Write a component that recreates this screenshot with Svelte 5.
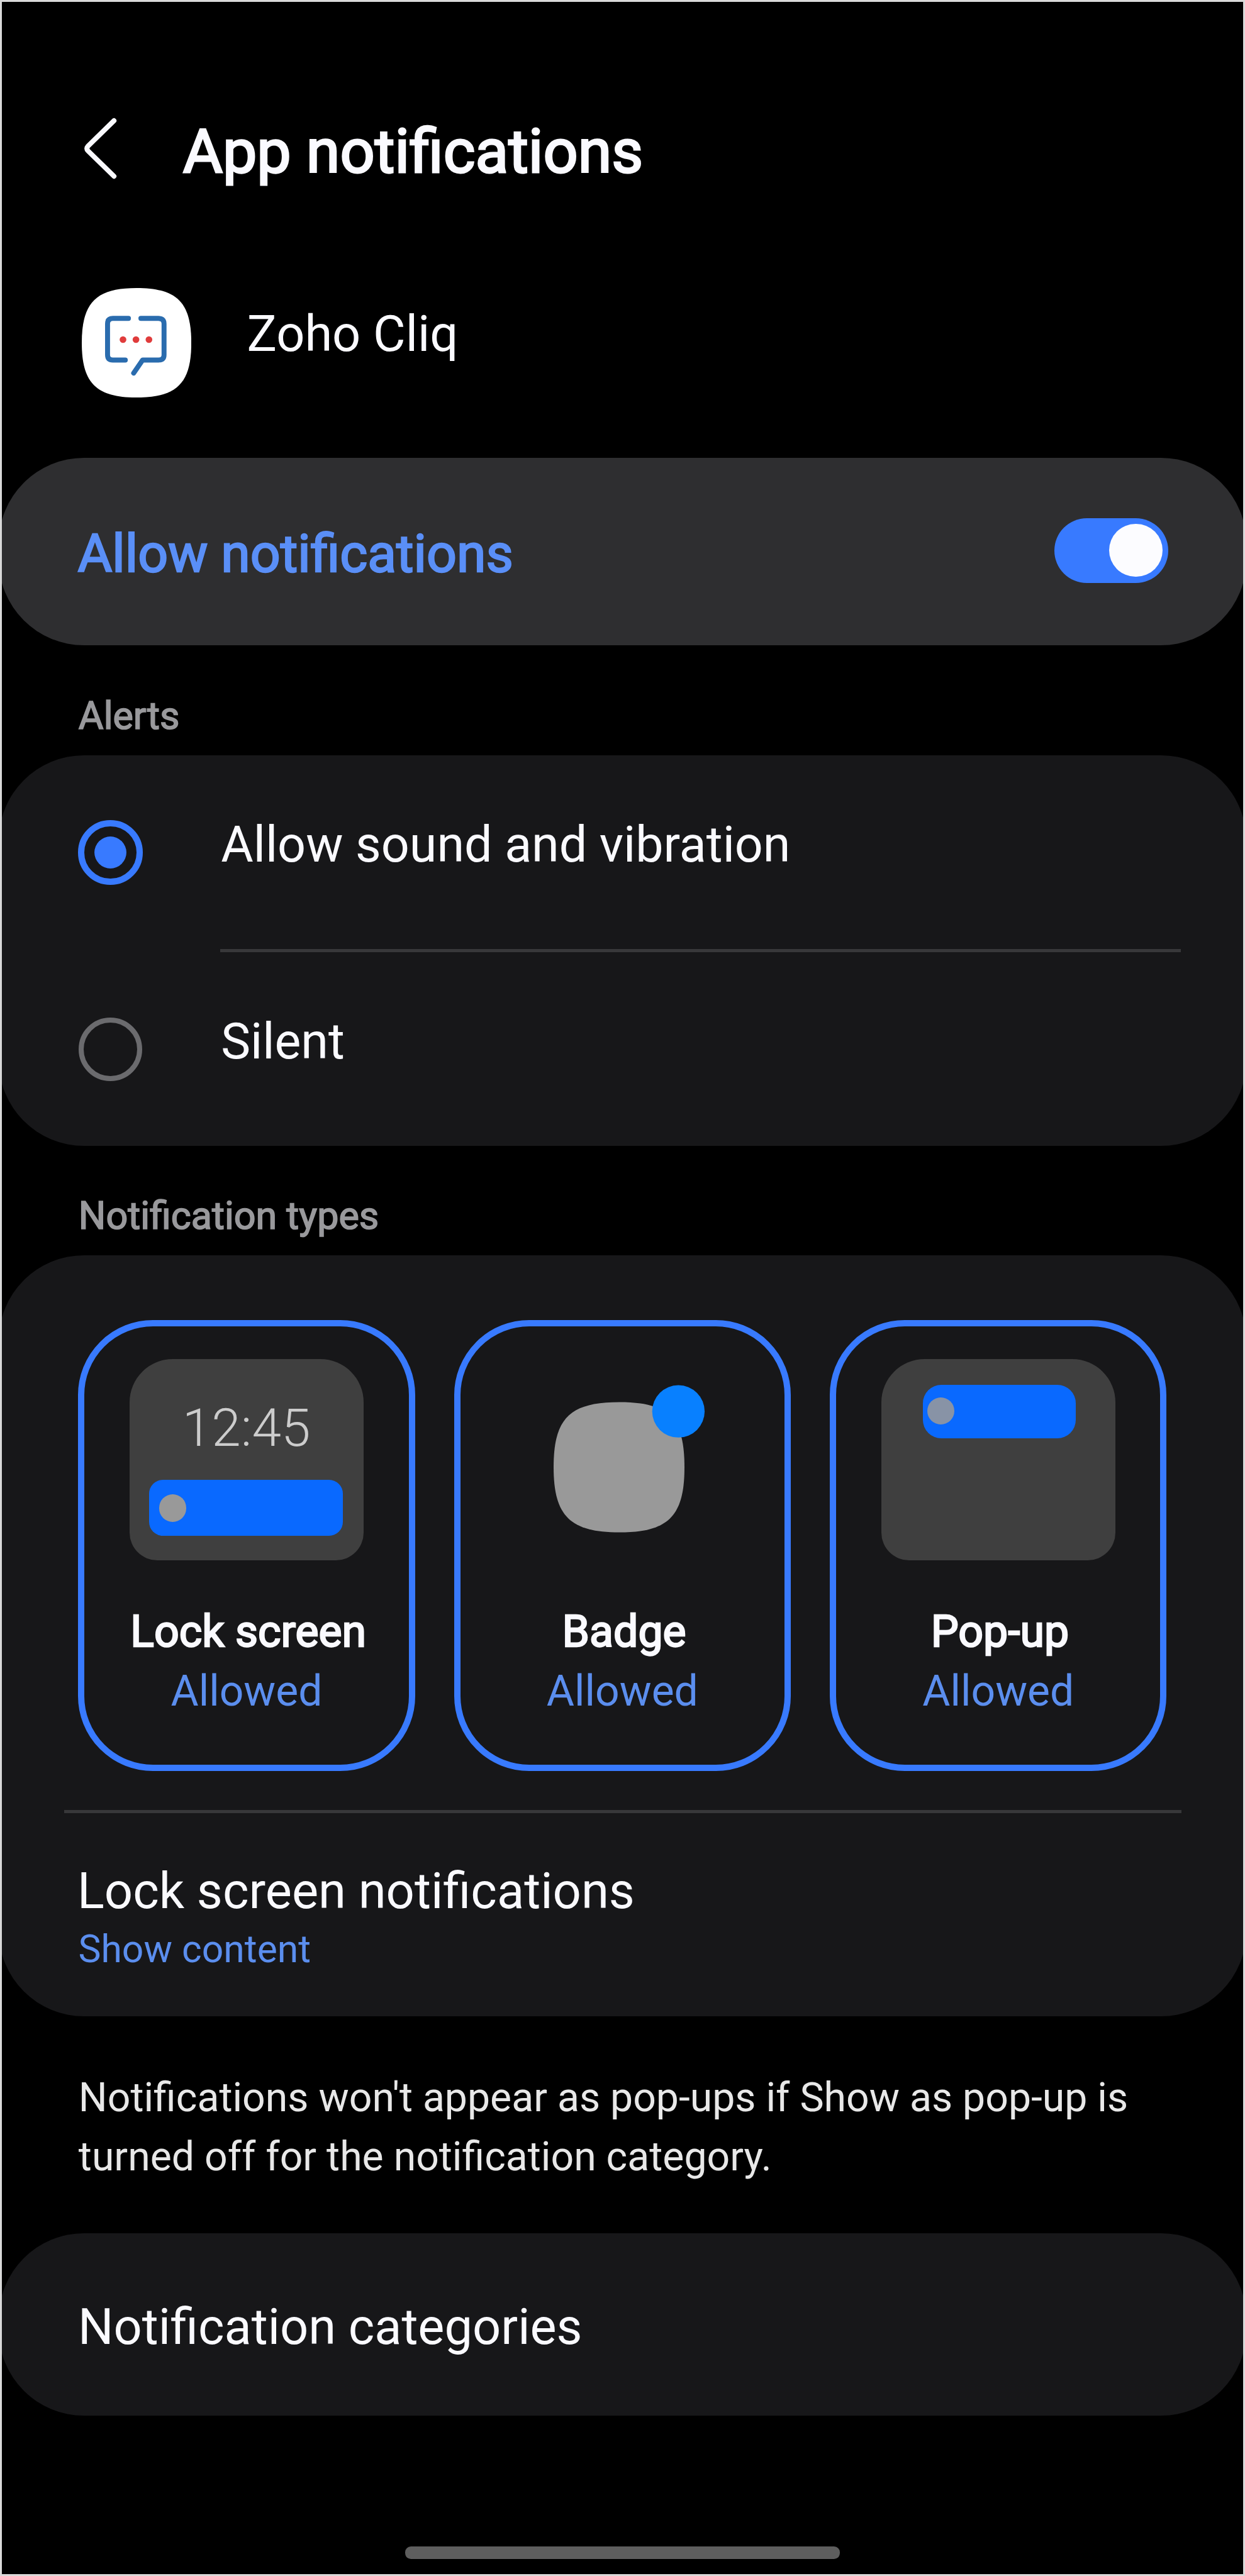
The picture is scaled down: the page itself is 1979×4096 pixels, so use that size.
<script>
	let allowed = true;
	let alert_mode = "sound";

	const alert_modes = [
		{id: "sound", label: "Allow sound and vibration"},
		{id: "silent", label: "Silent"},
	];

	let types = [
		{id: "lock", label: "Lock screen", on: true},
		{id: "badge", label: "Badge", on: true},
		{id: "popup", label: "Pop-up", on: true},
	];

	const toggle_allowed = () => allowed = !allowed;
	const set_mode = (id) => alert_mode = id;
	function toggle_type(type) {
		type.on = !type.on;
		types = types;
	}
</script>

<div class="screen">
	<header>
		<svg class="back" viewBox="0 0 64 112">
			<path d="M57 7.500 L12 51.500 Q8 56 12 60 L57 104" />
		</svg>
		<h1>App notifications</h1>
	</header>

	<div class="app_row">
		<svg class="app_icon" viewBox="0 0 190 190">
			<path class="plate" d="M0 95 C0 25 25 0 95 0 S190 25 190 95 S165 190 95 190 S0 165 0 95 Z" />
			<path class="bubble" d="M81 52.7 H54 Q44.700 52.700 44.700 62 V116 Q44.700 125 54 125 H75.500 M102.500 52.700 H133 Q142.700 52.700 142.700 62 V116 Q142.700 125 133 125 H105.500 L90 147.500" />
			<circle cx="71.500" cy="89.500" r="5.800" />
			<circle cx="94" cy="89.500" r="5.800" />
			<circle cx="116.500" cy="89.500" r="5.800" />
		</svg>
		<span>Zoho Cliq</span>
	</div>

	<section class="card main_switch">
		<span>Allow notifications</span>
		<button class="switch" class:on={allowed} on:click={toggle_allowed} aria-label="Allow notifications">
			<i></i>
		</button>
	</section>

	<h2>Alerts</h2>
	<section class="card alerts">
		{#each alert_modes as mode}
			<button class="mode" on:click={() => set_mode(mode.id)}>
				<span class="radio" class:selected={alert_mode == mode.id}></span>
				<span class="mode_label">{mode.label}</span>
			</button>
		{/each}
	</section>

	<h2>Notification types</h2>
	<section class="card types">
		<div class="tiles">
			{#each types as type}
				<button class="tile" class:on={type.on} on:click={() => toggle_type(type)}>
					<span class="preview {type.id}">
						{#if type.id == "lock"}
							<span class="clock">12:45</span>
							<span class="bar"><i></i></span>
						{:else if type.id == "badge"}
							<svg viewBox="0 0 264 256">
								<path d="M0 143 C0 58 28 30 114 30 S227 58 227 143 S199 256 114 256 S0 228 0 143 Z" />
								<circle cx="216.500" cy="46" r="45.500" />
							</svg>
						{:else}
							<span class="bar"><i></i></span>
						{/if}
					</span>
					<span class="name">{type.label}</span>
					<span class="state">{type.on ? "Allowed" : "Not allowed"}</span>
				</button>
			{/each}
		</div>
		<div class="lock_setting">
			<span class="title">Lock screen notifications</span>
			<span class="value">Show content</span>
		</div>
	</section>

	<p>Notifications won't appear as pop-ups if Show as pop-up is turned off for the notification category.</p>

	<section class="card categories">Notification categories</section>

	<div class="home_bar"></div>
</div>

<style>
	:global(html) { font-size: 9.163px; }
	:global(body) {
		margin: 0;
		background: #000;
	}

	.screen {
		display: flex;
		flex-direction: column;
		box-sizing: border-box;
		width: 100vw;
		height: 100vh;
		border: 0.4rem solid #d9d9d9;
		overflow: hidden;
		background: #000;
		color: #fafaff;
		font: 8.66rem/10rem Roboto, sans-serif;
	}
	.screen > * { flex-shrink: 0; }

	button {
		padding: 0;
		border: none;
		background: none;
		color: inherit;
		font: inherit;
		text-align: left;
	}
	i { display: block; border-radius: 50%; }

	/*
	 * HEADER
	 * */
	header {
		display: flex;
		align-items: flex-start;
		padding: 19.9rem 0 0 13.8rem;
		height: 29.8rem;
	}
	.back {
		width: 6.4rem;
		height: 11.2rem;
		margin-right: 11.2rem;
		fill: none;
		stroke: #fafaff;
		stroke-width: 8.5;
		stroke-linecap: round;
	}
	h1 {
		margin: 0;
		font-size: 10.58rem;
		line-height: 12.4rem;
		font-weight: 400;
		-webkit-text-stroke: 0.32rem #fafaff;
	}

	.app_row {
		display: flex;
		height: 29.4rem;
		padding-left: 13.9rem;
	}
	.app_icon {
		width: 19rem;
		height: 19rem;
		margin-right: 9.6rem;
	}
	.app_row span { margin-top: 2.95rem; }
	.plate { fill: #fff; }
	.bubble {
		fill: none;
		stroke: #2a6cae;
		stroke-width: 8.6;
		stroke-linecap: round;
		stroke-linejoin: round;
	}
	.app_icon circle { fill: #e03c3c; }

	/*
	 * CARDS
	 * */
	.card {
		box-sizing: border-box;
		margin: 0 -0.5rem;
		border-radius: 14.8rem;
		background: #171719;
	}
	.main_switch {
		display: flex;
		justify-content: space-between;
		height: 32.6rem;
		padding: 10.5rem 13.5rem 0 13.65rem;
		background: #2e2e30;
		color: #5a8ff7;
		font-size: 9.18rem;
		-webkit-text-stroke: 0.26rem #5a8ff7;
	}
	.main_switch span { margin-top: 1.25rem; }
	.switch {
		box-sizing: border-box;
		width: 19.7rem;
		height: 11.2rem;
		padding: 1rem;
		border-radius: 6rem;
		background: #5e5e60;
	}
	.switch.on { background: #387aff; }
	.switch i {
		width: 9.2rem;
		height: 9.2rem;
		background: #fcfcff;
	}
	.switch.on i { margin-left: auto; }

	h2 {
		margin: 0;
		padding: 8.2rem 0 2.8rem 13.3rem;
		color: #99999c;
		font-size: 6.66rem;
		line-height: 8rem;
		font-weight: 400;
		-webkit-text-stroke: 0.18rem #99999c;
	}

	.alerts {
		display: flex;
		flex-direction: column;
		height: 67.8rem;
	}
	.mode {
		display: flex;
		height: 34.2rem;
		padding-left: 13.85rem;
	}
	.radio {
		box-sizing: border-box;
		width: 11rem;
		height: 11rem;
		margin: 11.4rem 13.5rem 0 0;
		border: 0.9rem solid #6b6b6e;
		border-radius: 50%;
	}
	.radio.selected {
		width: 11.2rem;
		height: 11.2rem;
		margin: 11.3rem 13.4rem 0 -0.1rem;
		padding: 1.7rem;
		border: 1.1rem solid #387aff;
		background: #387aff content-box;
	}
	.mode_label {
		flex: 1;
		height: 34.2rem;
		padding-top: 10.65rem;
		margin-right: 11.3rem;
		box-sizing: border-box;
		text-indent: 0.15rem;
		font-size: 8.62rem;
	}
	.mode:first-child .mode_label { border-bottom: 0.6rem solid #38383a; }

	.types {
		height: 132.1rem;
		padding: 11.3rem 11.25rem 0;
	}
	.tiles {
		display: flex;
		gap: 6.8rem;
		height: 85rem;
		padding-left: 2.5rem;
		border-bottom: 0.6rem solid #38383a;
	}
	.tile {
		display: flex;
		flex-direction: column;
		align-items: center;
		flex-shrink: 0;
		box-sizing: border-box;
		width: 58.4rem;
		height: 78.2rem;
		padding-top: 5.65rem;
		border: 1.2rem solid #5e5e60;
		border-radius: 13rem;
	}
	.tile.on { border-color: #387aff; }

	.preview {
		box-sizing: border-box;
		display: flex;
		flex-direction: column;
		width: 40.6rem;
		height: 34.9rem;
		border-radius: 7.5rem 7.5rem 4.8rem 4.8rem;
		background: #3f3f3f;
	}
	.preview.badge { background: none; }
	.preview.badge svg {
		width: 26.4rem;
		height: 25.6rem;
		margin: 4.5rem 0 0 8.4rem;
	}
	.preview.badge path { fill: #999; }
	.preview.badge circle { fill: #0880ff; }
	.clock {
		height: 13.9rem;
		padding: 7rem 0 0 9.15rem;
		color: #ccc;
		font-size: 9.15rem;
		font-weight: 300;
	}
	.bar {
		box-sizing: border-box;
		background: #0969ff;
	}
	.bar i {
		width: 4.7rem;
		height: 4.7rem;
		background: #999;
	}
	.lock .bar {
		width: 33.6rem;
		height: 9.8rem;
		margin-left: 3.4rem;
		padding: 2.6rem 1.7rem;
		border-radius: 2.4rem;
	}
	.popup .bar {
		width: 26.5rem;
		height: 9.2rem;
		margin: 4.5rem 0 0 7.2rem;
		padding: 2.1rem 0.8rem;
		border-radius: 3.2rem;
	}
	.popup .bar i { background: #8893a6; }

	.name {
		margin-top: 7.45rem;
		padding-left: 0.6rem;
		font-size: 7.62rem;
		-webkit-text-stroke: 0.26rem #fafaff;
	}
	.state {
		margin-top: 0.4rem;
		color: #5b8eee;
		font-size: 7.4rem;
	}

	.lock_setting {
		display: flex;
		flex-direction: column;
		padding: 8.5rem 0 0 2.35rem;
	}
	.lock_setting .title { font-size: 8.68rem; }
	.lock_setting .value {
		margin-top: 0.1rem;
		padding-left: 0.15rem;
		color: #5b8eee;
		font-size: 6.62rem;
	}

	p {
		margin: 0;
		padding: 8.9rem 17rem 8.2rem 13.3rem;
		color: #e8e8e8;
		font-size: 7.02rem;
		line-height: 10.27rem;
	}

	.categories {
		height: 31.6rem;
		padding: 11.25rem 13.7rem 0;
	}

	.home_bar {
		width: 75.5rem;
		height: 2.2rem;
		margin: auto auto 2.6rem;
		border-radius: 1rem;
		background: #5e5e5e;
	}
</style>
